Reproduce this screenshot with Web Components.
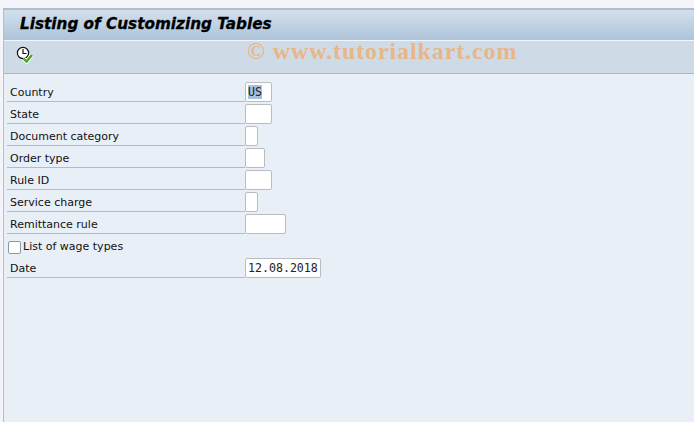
<!DOCTYPE html>
<html>
<head>
<meta charset="utf-8">
<style>
  html, body { margin: 0; height: 100%; overflow: hidden; background: #f3f5fa; }
  body { padding: 8px 0 0 3px; box-sizing: border-box; font-family: "DejaVu Sans", sans-serif; }
</style>
</head>
<body>
<sap-screen>
  <sap-title slot="title">Listing of Customizing Tables</sap-title>
  <sap-toolbar slot="toolbar"></sap-toolbar>
  <sap-field label="Country" value="US" chars="27" selected></sap-field>
  <sap-field label="State" chars="27"></sap-field>
  <sap-field label="Document category" chars="13"></sap-field>
  <sap-field label="Order type" chars="20"></sap-field>
  <sap-field label="Rule ID" chars="27"></sap-field>
  <sap-field label="Service charge" chars="13"></sap-field>
  <sap-field label="Remittance rule" chars="41"></sap-field>
  <sap-check label="List of wage types"></sap-check>
  <sap-field label="Date" value="12.08.2018" chars="76"></sap-field>
</sap-screen>

<script>
class SapScreen extends HTMLElement {
    constructor() {
        super();
        this.attachShadow({ mode: 'open' });
        this.shadowRoot.innerHTML = `
          <style>
            :host {
              display: flex;
              flex-direction: column;
              height: 414px;
              border-top: 2px solid #b4bcc6;
              border-left: 1px solid #b4bfca;
              background: #e8eff7;
            }
            .form {
              display: flex;
              flex-direction: column;
              padding: 6px 0 0 3px;
            }
          </style>
          <slot name="title"></slot>
          <slot name="toolbar"></slot>
          <div class="form"><slot></slot></div>
        `;
    }
}

class SapTitle extends HTMLElement {
    constructor() {
        super();
        this.attachShadow({ mode: 'open' });
        this.shadowRoot.innerHTML = `
          <style>
            :host {
              display: flex;
              align-items: center;
              height: 31px;
              padding: 0 0 3px 16px;
              box-sizing: border-box;
              background: linear-gradient(#d2e0ec, #adc3da);
              border-bottom: 1px solid #f2f6fa;
              color: #000;
              font: italic bold 15.25px "DejaVu Sans", sans-serif;
              -webkit-text-stroke: 0.3px #000;
            }
          </style>
          <slot></slot>
        `;
    }
}

class SapToolbar extends HTMLElement {
    constructor() {
        super();
        this.attachShadow({ mode: 'open' });
        this.shadowRoot.innerHTML = `
          <style>
            :host {
              display: flex;
              align-items: center;
              position: relative;
              height: 33px;
              padding: 0 0 4px 12px;
              box-sizing: border-box;
              background: #cedbe7;
              border-bottom: 1px solid #a7b6c3;
            }
            svg { display: block; }
            .mark {
              position: absolute;
              left: 243px;
              top: -4px;
              color: #e8b688;
              font: bold 24px "Liberation Serif", serif;
              letter-spacing: 0.9px;
              line-height: 28px;
            }
          </style>
          <svg width="18" height="18" viewBox="0 0 18 18">
            <circle cx="7" cy="7" r="5.6" fill="#fff" stroke="#111" stroke-width="1.2"/>
            <path d="M7 3V7.5H10.5" fill="none" stroke="#111" stroke-width="1.2"/>
            <path d="M7.5 12.5L10.5 15.5L16 9" fill="none" stroke="#fff" stroke-width="4"/>
            <path d="M7.5 12.5L10.5 15.5L16 9" fill="none" stroke="#4fa02c" stroke-width="2.4"/>
          </svg>
          <span class="mark">© www.tutorialkart.com</span>
        `;
    }
}

class SapField extends HTMLElement {
    constructor() {
        super();
        this.attachShadow({ mode: 'open' });
    }

    connectedCallback() {
        const value = this.getAttribute('value') || '';
        const selected = this.hasAttribute('selected');
        this.shadowRoot.innerHTML = `
          <style>
            :host {
              display: flex;
              align-items: flex-end;
              height: 22px;
              box-sizing: border-box;
            }
            .label {
              width: 238px;
              height: 21px;
              line-height: 24px;
              padding-left: 3px;
              box-sizing: border-box;
              border-bottom: 1px solid #b3bcc4;
              font-size: 11px;
              color: #111;
            }
            .input {
              width: ${this.getAttribute('chars')}px;
              height: 20px;
              box-sizing: border-box;
              background: #fff;
              border: 1px solid #b9bdc1;
              border-radius: 2px;
              padding: 0 0 0 2px;
              font: 11.6px/19px "DejaVu Sans Mono", monospace;
              color: #222;
              overflow: hidden;
              white-space: nowrap;
            }
            .sel { background: #a8c0dc; }
          </style>
          <div class="label">${this.getAttribute('label')}</div>
          <div class="input"><span class="${selected ? 'sel' : ''}">${value}</span></div>
        `;
    }
}

class SapCheck extends HTMLElement {
    constructor() {
        super();
        this.attachShadow({ mode: 'open' });
    }

    connectedCallback() {
        this.shadowRoot.innerHTML = `
          <style>
            :host {
              display: flex;
              align-items: center;
              gap: 2px;
              height: 22px;
              padding-left: 1px;
              font-size: 11px;
              color: #111;
            }
            .box {
              width: 11px;
              height: 11px;
              margin-top: 4px;
              background: #fff;
              border: 1px solid #8f979f;
              border-radius: 2px;
            }
            span { padding-top: 3px; }
          </style>
          <div class="box"></div>
          <span>${this.getAttribute('label')}</span>
        `;
    }
}

customElements.define('sap-screen', SapScreen);
customElements.define('sap-title', SapTitle);
customElements.define('sap-toolbar', SapToolbar);
customElements.define('sap-field', SapField);
customElements.define('sap-check', SapCheck);
</script>
</body>
</html>
